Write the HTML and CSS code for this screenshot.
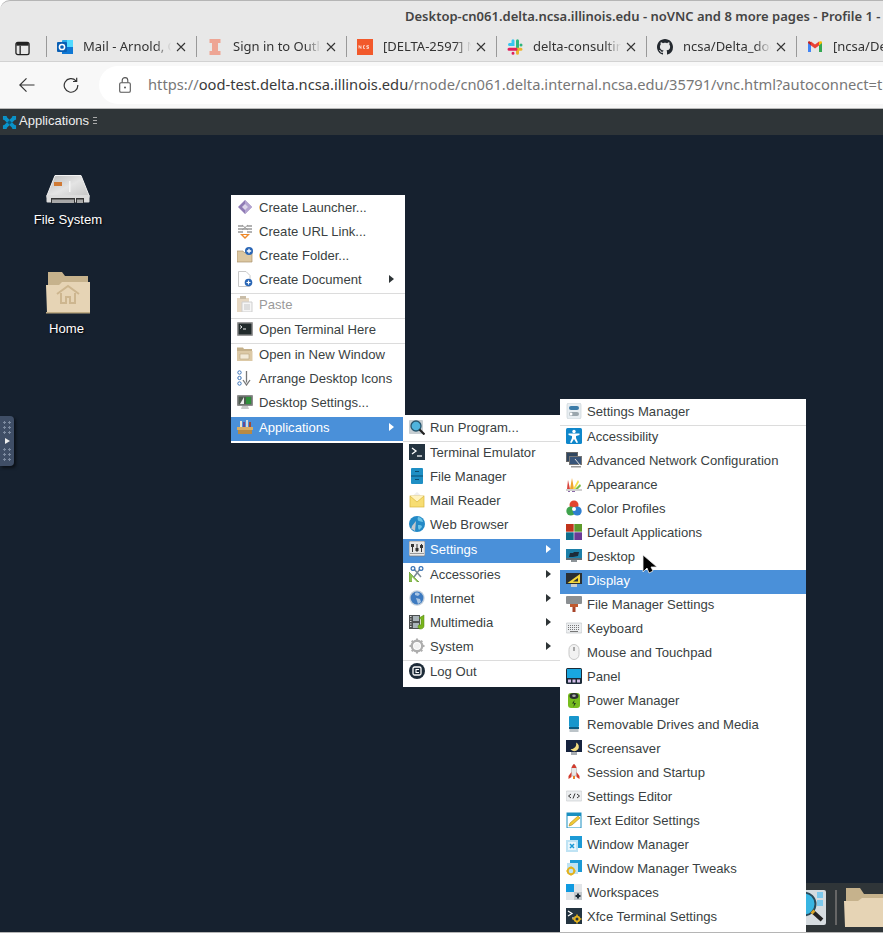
FILE: index.html
```html
<!DOCTYPE html>
<html>
<head>
  <title>Desktop-cn061.delta.ncsa.illinois.edu - noVNC</title>
  <link rel="stylesheet" href="styles.css">
</head>
<body>
  <div class="browser">
    <div class="titlebar">
      <span class="window-title">Desktop-cn061.delta.ncsa.illinois.edu - noVNC and 8 more pages - Profile 1 - Microsoft Edge</span>
    </div>

    <div class="tabstrip">
      <div class="sidebar-btn">
        <svg width="15" height="15" viewBox="0 0 16 16"><rect x="1" y="1.500" width="14" height="13" rx="2" fill="none" stroke="#222" stroke-width="1.400"/><path d="M5.500 5v9.500" stroke="#222" stroke-width="1.400"/><rect x="1.500" y="2" width="13" height="3" fill="#222"/></svg>
      </div>
      <div class="tab">
        <svg class="favicon" viewBox="0 0 16 16"><rect x="5" y="1" width="11" height="14" rx="1" fill="#28a8ea"/><rect x="10" y="1" width="6" height="7" fill="#50d9ff"/><rect x="5" y="8" width="11" height="7" fill="#0f78d4"/><rect x="0" y="3" width="10" height="10" rx="1" fill="#0a5fb4"/><circle cx="5" cy="8" r="2.600" fill="none" stroke="#fff" stroke-width="1.500"/></svg>
        <span class="tab-title">Mail - Arnold, Gregory</span>
        <svg class="tab-close" viewBox="0 0 10 10"><path d="M1 1l8 8M9 1l-8 8"/></svg>
      </div>
      <div class="tab">
        <svg class="favicon" viewBox="0 0 16 16"><path d="M2.500 0h11v4H11v8h2.500v4h-11v-4H5V4H2.500z" fill="#eea594"/></svg>
        <span class="tab-title">Sign in to Outlook</span>
        <svg class="tab-close" viewBox="0 0 10 10"><path d="M1 1l8 8M9 1l-8 8"/></svg>
      </div>
      <div class="tab">
        <svg class="favicon" viewBox="0 0 16 16"><rect width="16" height="16" fill="#f2592b"/><path d="M2 9.500v-3l2 3v-3M8 6.700H6.500v2.700H8M12 6.700H9.800V8h1.700v1.400H9.500" fill="none" stroke="#fff" stroke-width=".7"/></svg>
        <span class="tab-title">[DELTA-2597] NCSA Jira</span>
        <svg class="tab-close" viewBox="0 0 10 10"><path d="M1 1l8 8M9 1l-8 8"/></svg>
      </div>
      <div class="tab">
        <svg class="favicon" viewBox="0 0 16 16" stroke-width="3" stroke-linecap="round" fill="none"><path d="M6 1.800v3.700H2.500" stroke="#36c5f0"/><path d="M14 6v.1M10.500 1.800v7" stroke="#2eb67d"/><path d="M14 10.300h-3.500v3.900" stroke="#ecb22e"/><path d="M2 10.300h7M6 14.200v0" stroke="#e01e5a"/></svg>
        <span class="tab-title">delta-consulting (Channel)</span>
        <svg class="tab-close" viewBox="0 0 10 10"><path d="M1 1l8 8M9 1l-8 8"/></svg>
      </div>
      <div class="tab">
        <svg class="favicon" viewBox="0 0 16 16"><path fill="#24292f" d="M8 0C3.580 0 0 3.580 0 8c0 3.540 2.290 6.530 5.470 7.590.4.070.55-.17.55-.38 0-.19-.01-.82-.01-1.490-2.010.37-2.530-.49-2.690-.94-.09-.23-.48-.94-.82-1.130-.28-.15-.68-.52-.01-.53.63-.01 1.080.58 1.230.82.72 1.210 1.870.87 2.330.66.07-.52.28-.87.51-1.070-1.780-.2-3.640-.89-3.640-3.950 0-.87.31-1.590.82-2.150-.08-.2-.36-1.020.08-2.120 0 0 .67-.21 2.200.82.64-.18 1.320-.27 2-.27.68 0 1.360.09 2 .27 1.530-1.040 2.200-.82 2.200-.82.44 1.100.16 1.920.08 2.120.51.56.82 1.270.82 2.150 0 3.070-1.870 3.750-3.650 3.950.29.25.54.73.54 1.480 0 1.070-.01 1.930-.01 2.200 0 .21.15.46.55.38A8.013 8.013 0 0016 8c0-4.420-3.580-8-8-8z"/></svg>
        <span class="tab-title">ncsa/Delta_docs</span>
        <svg class="tab-close" viewBox="0 0 10 10"><path d="M1 1l8 8M9 1l-8 8"/></svg>
      </div>
      <div class="tab">
        <svg class="favicon" viewBox="0 0 16 16"><path d="M1 3.500V13h3V6z" fill="#4285f4"/><path d="M12 6v7h3V3.500z" fill="#34a853"/><path d="M12 2.500v4L15 4v-.5c0-1-1.200-1.700-2-1z" fill="#fbbc04"/><path d="M4 6.500v-4l4 3 4-3v4l-4 3z" fill="#ea4335"/><path d="M1 4v-.5c0-1 1.200-1.700 2-1l1 .8v3.200z" fill="#c5221f"/></svg>
        <span class="tab-title">[ncsa/Delta_docs] Issue</span>
      </div>
    </div>

    <div class="toolbar">
      <svg class="nav-btn" viewBox="0 0 16 16"><path d="M15.500 8H.8M7.500 1.300L.8 8l6.700 6.700" fill="none" stroke="#333" stroke-width="1.200"/></svg>
      <svg class="nav-btn" viewBox="0 0 16 16"><path d="M13 3.800A6.800 6.800 0 1 0 14.800 8M13.700.8v3.700H10" fill="none" stroke="#333" stroke-width="1.200"/></svg>
      <div class="omnibox">
        <svg class="lock" viewBox="0 0 12 16"><rect x=".7" y="5.700" width="10.600" height="9.600" rx="1.300" fill="none" stroke="#555" stroke-width="1.100"/><path d="M3.200 5.500V3.400a2.800 2.800 0 0 1 5.600 0v2.100" fill="none" stroke="#555" stroke-width="1.100"/><circle cx="6" cy="10.500" r="1" fill="#555"/></svg>
        <span class="url">https://<b>ood-test.delta.ncsa.illinois.edu</b>/rnode/cn061.delta.internal.ncsa.edu/35791/vnc.html?autoconnect=true&amp;path=rnode</span>
      </div>
    </div>
  </div>

  <div class="desktop">
    <div class="panel">
      <svg class="panel-logo" viewBox="0 0 16 16"><path d="M3 3l10 10M13 3L3 13" stroke="#0a93c9" stroke-width="4"/><path d="M1 1h4v2H3v2H1zM11 1h4v4h-2V3h-2zM1 11h2v2h2v2H1zM13 11h2v4h-4v-2h2z" fill="#0a93c9"/><path d="M8 5.500L10.500 8 8 10.500 5.500 8z" fill="#07597c"/></svg>
      <span class="panel-label">Applications</span>
      <span class="panel-handle"></span>
    </div>

    <div class="desk-icon desk-fs">
      <svg width="44" height="28" viewBox="0 0 44 28">
        <defs><linearGradient id="drive" x1="0" y1="0" x2="1" y2="1"><stop offset="0" stop-color="#b9b9b9"/><stop offset=".5" stop-color="#e4e4e4"/><stop offset="1" stop-color="#c4c4c4"/></linearGradient></defs>
        <path d="M9 .5h26l8 20v2H1v-2z" fill="url(#drive)" stroke="#f2f2f2"/>
        <rect x="8" y="7" width="8" height="4" fill="#d07a35"/>
        <rect x="23" y="6" width="1.500" height="11" fill="#f4f4f4"/>
        <path d="M.5 20h43v6.500a1 1 0 0 1-1 1h-41a1 1 0 0 1-1-1z" fill="#dcdcdc"/>
        <path d="M5 23h24v5H5zM30 23h8v5h-8z" fill="#353535"/>
        <path d="M6 24.500h22V28H6zM31 24.500h6V28h-6z" fill="#a8a8a8"/>
      </svg>
      <span class="desk-label">File System</span>
    </div>
    <div class="desk-icon desk-home">
      <svg width="44" height="43" viewBox="0 0 44 43"><path d="M2 1h14l3 4h23v10H2z" fill="#c6b28c"/><path d="M0 14h13l3-3h28v31H1z" fill="#e6d4b5"/><path d="M0 41h44v1.500H0z" fill="#bda981"/><path d="M11 23l11-8 11 8M15 22v10h5v-6h4v6h5V22" fill="none" stroke="#cdb68f" stroke-width="2"/></svg>
      <span class="desk-label">Home</span>
    </div>

    <div class="side-handle">
      <span class="handle-dots"></span>
      <span class="handle-play"></span>
      <span class="handle-dots"></span>
    </div>

    <!-- desktop context menu -->
    <div class="menu menu-main">
      <div class="item"><svg class="ico" viewBox="0 0 16 16"><path d="M8 1l7 7-7 7-7-7z" fill="#8f7bb5"/><path d="M8 1l7 7-7 7z" fill="#b3a4d0"/><path d="M5 8l3-3 3 3-3 3z" fill="#ddd6ea"/></svg>Create Launcher...</div>
      <div class="item"><svg class="ico" viewBox="0 0 16 16"><path d="M1 3h5M10 3h5M1 6h14M1 9h5M10 9h5" stroke="#666" stroke-width="1.200"/><path d="M5 2l6 5M11 2L5 7" stroke="#999"/><path d="M3 11h10l-5 5z" fill="#ee8a2b"/><path d="M6 12h4l-2 2z" fill="#fff"/></svg>Create URL Link...</div>
      <div class="item"><svg class="ico" viewBox="0 0 16 16"><path d="M0 4h6l1 1.500h8V15H0z" fill="#dcc7a0" stroke="#a9946f" stroke-width=".7"/><circle cx="12" cy="4" r="4" fill="#2a66b5"/><path d="M9.800 4h4.400M12 1.800v4.400" stroke="#fff" stroke-width="1.300"/></svg>Create Folder...</div>
      <div class="item"><svg class="ico" viewBox="0 0 16 16"><path d="M1.500.5H9l4 4v11H1.500z" fill="#fff" stroke="#c8c8c8"/><circle cx="11.500" cy="11.500" r="3.800" fill="#2a66b5"/><path d="M9.500 11.500h4M11.500 9.500v4" stroke="#fff" stroke-width="1.200"/></svg>Create Document<span class="arrow"></span></div>
      <div class="sep"></div>
      <div class="item disabled"><svg class="ico" viewBox="0 0 16 16"><rect x="0" y="2" width="12" height="14" fill="#e6d8c3"/><rect x="3" y="0" width="6" height="3" fill="#c9bda8"/><path d="M5 6h10v10H5z" fill="#f6f6f6" stroke="#cfcfcf"/><path d="M7 9h6M7 11h6M7 13h6" stroke="#c4c4c4"/></svg>Paste</div>
      <div class="sep"></div>
      <div class="item"><svg class="ico" viewBox="0 0 16 16"><rect y="1" width="16" height="14" rx="1" fill="#9a9a9a"/><rect x="1.500" y="2.500" width="13" height="11" fill="#222b2c"/><path d="M3 4.500L5 6 3 7.500M6 8h3" stroke="#eee" fill="none"/></svg>Open Terminal Here</div>
      <div class="sep"></div>
      <div class="item"><svg class="ico" viewBox="0 0 16 16"><path d="M0 1.500h6L7 3h8v12H0z" fill="#c4b08a"/><path d="M0 5h15.500v10H0z" fill="#dcc9a6"/><path d="M3 8h9v5H3z" fill="#f2ead8" stroke="#b9a680" stroke-width=".6"/></svg>Open in New Window</div>
      <div class="item"><svg class="ico" viewBox="0 0 16 16"><circle cx="2.500" cy="2.500" r="1.700" fill="none" stroke="#3c74b8"/><circle cx="2.500" cy="8" r="1.700" fill="none" stroke="#3c74b8"/><circle cx="2.500" cy="13.500" r="1.700" fill="none" stroke="#3c74b8"/><path d="M9.500 1v11.500M6 10l3.500 5 3.500-5" fill="none" stroke="#777" stroke-width="1.300"/></svg>Arrange Desktop Icons</div>
      <div class="item"><svg class="ico" viewBox="0 0 16 16"><rect y="1" width="16" height="11" rx="1" fill="#8d8d8d"/><rect x="1.500" y="2.500" width="13" height="8" fill="#4d5a4e"/><path d="M9 3h5v7H9z" fill="#2f8f3a"/><path d="M3 10l4-7v7z" fill="#eee"/><path d="M5 12h6l1 3H4z" fill="#c8c8c8"/></svg>Desktop Settings...</div>
      <div class="item active"><svg class="ico" viewBox="0 0 16 16"><path d="M1 9h14v6H1z" fill="#b88a45"/><path d="M0 8h16v3H0z" fill="#d9ad63"/><rect x="3" y="2" width="2" height="6" fill="#e8e2d0"/><rect x="6" y="3" width="2" height="5" fill="#6a4a8c"/><rect x="9" y="1" width="2" height="7" fill="#d8d8d8"/><rect x="12" y="3" width="2" height="5" fill="#a04a3a"/></svg>Applications<span class="arrow"></span></div>
    </div>

    <!-- applications submenu -->
    <div class="menu menu-apps">
      <div class="item"><svg class="ico" viewBox="0 0 16 16"><rect y="1" width="14" height="14" rx="1" fill="#c7ced2"/><circle cx="7" cy="7" r="5" fill="#4fb3dc" stroke="#27566e" stroke-width="1.300"/><path d="M10.500 10.500l5 5" stroke="#222" stroke-width="2.200"/></svg>Run Program...</div>
      <div class="sep"></div>
      <div class="item"><svg class="ico" viewBox="0 0 16 16"><rect width="16" height="16" fill="#243440"/><path d="M3 4l4 3-4 3" fill="none" stroke="#fff" stroke-width="1.300"/><path d="M8 12h5" stroke="#fff" stroke-width="1.300"/></svg>Terminal Emulator</div>
      <div class="item"><svg class="ico" viewBox="0 0 16 16"><rect x="2" y="0" width="12" height="16" rx="1" fill="#1f8fc4"/><path d="M2 8h12" stroke="#0b4d70"/><path d="M6 3.500h4M6 11.500h4" stroke="#0b4d70" stroke-width="1.200"/></svg>File Manager</div>
      <div class="item"><svg class="ico" viewBox="0 0 16 16"><path d="M8 0l4 3.500H4z" fill="#eee"/><rect x="1" y="4" width="14" height="11" fill="#f7dd72" stroke="#d8b53c" stroke-width=".7"/><path d="M1 4l7 6 7-6" fill="#fff3c0" stroke="#d8b53c" stroke-width=".7"/></svg>Mail Reader</div>
      <div class="item"><svg class="ico" viewBox="0 0 16 16"><circle cx="8" cy="8" r="8" fill="#2389c6"/><path d="M9 1c3 0 5 3 5 5-2 0-3-1-4-1S8 3 9 1zM9 9c2 0 4 0 4 2l-3 3c-1-1-1-3-1-5z" fill="#6cc4e8"/><path d="M7 5l-1 10-3-2-1 1 1-4z" fill="#c3c7ca"/></svg>Web Browser</div>
      <div class="item active"><svg class="ico" viewBox="0 0 16 16"><rect width="16" height="15" rx="1" fill="#e8e8e8" stroke="#777" stroke-width=".7"/><path d="M3.500 3v8M8 3v8M12.500 3v8" stroke="#333"/><rect x="2" y="3" width="3" height="3" fill="#333"/><rect x="6.500" y="7" width="3" height="3" fill="#333"/><rect x="11" y="4" width="3" height="3" fill="#333"/><path d="M1 12.500h14" stroke="#999"/></svg>Settings<span class="arrow"></span></div>
      <div class="item"><svg class="ico" viewBox="0 0 16 16"><path d="M0 16V6l10 10z" fill="#8cc152" stroke="#5a8f2a" stroke-width=".6"/><path d="M3 16v-5l5 5z" fill="#fff"/><path d="M5 11l6-8M12 11L5 3" stroke="#7a8a96" stroke-width="1.500"/><circle cx="4" cy="2.500" r="1.900" fill="none" stroke="#3671b5" stroke-width="1.200"/><circle cx="12" cy="2.500" r="1.900" fill="none" stroke="#3671b5" stroke-width="1.200"/></svg>Accessories<span class="arrow"></span></div>
      <div class="item"><svg class="ico" viewBox="0 0 16 16"><circle cx="8" cy="8" r="7.700" fill="#c4d0dc"/><circle cx="8" cy="8" r="6.400" fill="#3d7ac0"/><path d="M6 3c2-1 4 0 5 1L9 6 6 5zM7 8l4 1 1 3-3 2-1-3z" fill="#a9c5e3"/></svg>Internet<span class="arrow"></span></div>
      <div class="item"><svg class="ico" viewBox="0 0 16 16"><rect y="1" width="11" height="14" fill="#4d5051"/><path d="M1 2.500h1.500M1 5h1.500M1 7.500h1.500M1 10h1.500M1 12.500h1.500" stroke="#ddd"/><rect x="4" y="2" width="6" height="5" fill="#a9b3b9"/><rect x="4" y="9" width="6" height="5" fill="#a9b3b9"/><path d="M10 4l5-3v11c0 2-2 3-3.500 3S9 14 9 12.500s1.500-2 3-1.500V5z" fill="#7ab51d" stroke="#4f7f10" stroke-width=".5"/></svg>Multimedia<span class="arrow"></span></div>
      <div class="item"><svg class="ico" viewBox="0 0 16 16"><circle cx="8" cy="8" r="5.200" fill="none" stroke="#aeaeae" stroke-width="2.400"/><path d="M8 .5V3M8 13v2.500M.5 8H3M13 8h2.500M2.700 2.700l1.800 1.800M11.500 11.500l1.800 1.800M2.700 13.300l1.800-1.800M11.500 4.500l1.800-1.800" stroke="#aeaeae" stroke-width="2"/><circle cx="8" cy="8" r="3" fill="#f2f2f2"/></svg>System<span class="arrow"></span></div>
      <div class="sep"></div>
      <div class="item"><svg class="ico" viewBox="0 0 16 16"><circle cx="8" cy="8" r="8" fill="#1d2b38"/><rect x="4" y="4" width="8" height="8" rx="1.500" fill="none" stroke="#fff" stroke-width="1.300"/><path d="M10 6.500H7v3h3" fill="none" stroke="#fff" stroke-width="1.100"/></svg>Log Out</div>
    </div>

    <!-- settings submenu -->
    <div class="menu menu-settings">
      <div class="item"><svg class="ico" viewBox="0 0 16 16"><rect x="1" y="0" width="14" height="16" rx="2" fill="#e8eef2" stroke="#c2ccd2" stroke-width=".6"/><rect x="3" y="3" width="10" height="4" rx="2" fill="#3b7ba8"/><rect x="3" y="9" width="10" height="4" rx="2" fill="#9aa6ad"/><circle cx="5" cy="11" r="1.500" fill="#fff"/></svg>Settings Manager</div>
      <div class="sep"></div>
      <div class="item"><svg class="ico" viewBox="0 0 16 16"><rect width="16" height="16" rx="1.500" fill="#0f87cb"/><circle cx="8" cy="3.500" r="1.700" fill="#fff"/><path d="M2.500 5.500h11V7L10 8v2l2 4.500-1.500.5L8 11l-2.500 4L4 14.500 6 10V8L2.500 7z" fill="#fff"/></svg>Accessibility</div>
      <div class="item"><svg class="ico" viewBox="0 0 16 16"><rect x="0" y="0" width="12" height="10" fill="#666"/><rect x="1" y="1" width="10" height="8" fill="#30465f"/><rect x="3" y="4" width="13" height="9" fill="#777"/><rect x="4" y="5" width="11" height="7" fill="#38557a"/><path d="M5 14h10v1.500H5z" fill="#999"/><path d="M9 7l5 6" stroke="#ddd"/></svg>Advanced Network Configuration</div>
      <div class="item"><svg class="ico" viewBox="0 0 16 16"><path d="M0 15h16v-2H0z" fill="#d0d0d0"/><path d="M1 13l1-9 2 9z" fill="#d9433a"/><path d="M4 13L6 2l2 11z" fill="#f0a52f"/><path d="M7 13l5-9 1 2-4 7z" fill="#f6e04a"/><path d="M9 13l5-5 1 2-3 3z" fill="#7bbb4a"/><path d="M2 15h2v1H2zM6 15h3v1H6z" fill="#8a6aa8"/></svg>Appearance</div>
      <div class="item"><svg class="ico" viewBox="0 0 16 16"><circle cx="8" cy="5" r="4.500" fill="#e2452f"/><circle cx="4.800" cy="11" r="4.500" fill="#3fa34d"/><circle cx="11.200" cy="11" r="4.500" fill="#2f7fd0"/><circle cx="8" cy="9" r="2" fill="#fff"/></svg>Color Profiles</div>
      <div class="item"><svg class="ico" viewBox="0 0 16 16"><rect width="7.700" height="7.700" fill="#c1341c"/><rect x="8.300" width="7.700" height="7.700" fill="#5d9a2b"/><rect y="8.300" width="7.700" height="7.700" fill="#0f6e8c"/><rect x="8.300" y="8.300" width="7.700" height="7.700" fill="#6b3a96"/></svg>Default Applications</div>
      <div class="item"><svg class="ico" viewBox="0 0 16 16"><rect y="1" width="16" height="11" fill="#1c7fa8"/><rect y="10" width="16" height="2" fill="#5d6d75"/><path d="M3 9l1-4h3l1-1h5l-1 4-5 1z" fill="#1d2b38"/><path d="M5 12h6v2H5z" fill="#8d9498"/></svg>Desktop</div>
      <div class="item active"><svg class="ico" viewBox="0 0 16 16"><rect y="1" width="16" height="11" fill="#2a2f33"/><path d="M1.500 11L14 2v9z" fill="#f4d73a"/><path d="M7 9.500L12 6v3.500z" fill="#2a2f33"/><path d="M5 12h6v3H5z" fill="#c8ccd0"/></svg>Display</div>
      <div class="item"><svg class="ico" viewBox="0 0 16 16"><rect y="0" width="16" height="8" rx="1" fill="#8b8f92"/><rect x="6.500" y="8" width="3" height="8" fill="#a8442a"/><rect x="4" y="8" width="8" height="3" fill="#c05a30"/></svg>File Manager Settings</div>
      <div class="item"><svg class="ico" viewBox="0 0 16 16"><rect y="3" width="16" height="10" rx="1" fill="#eceef0" stroke="#b8bcc0" stroke-width=".6"/><path d="M2 5.500h12M2 7.500h12M2 9.500h12" stroke="#777" stroke-dasharray="1 1"/><path d="M4 11.500h8" stroke="#777"/></svg>Keyboard</div>
      <div class="item"><svg class="ico" viewBox="0 0 16 16"><rect x="3" y=".5" width="10" height="15" rx="5" fill="#f2f2f2" stroke="#c8c8c8"/><rect x="7.300" y="3" width="1.400" height="4" fill="#888"/></svg>Mouse and Touchpad</div>
      <div class="item"><svg class="ico" viewBox="0 0 16 16"><rect width="16" height="16" rx="1.500" fill="#1c2b38"/><rect x="1" y="1" width="14" height="9" fill="#19a7e0"/><rect x="2" y="11.500" width="3" height="3" fill="#d4bfe8"/><rect x="6.500" y="11.500" width="3" height="3" fill="#d4bfe8"/><rect x="11" y="11.500" width="3" height="3" fill="#d4bfe8"/></svg>Panel</div>
      <div class="item"><svg class="ico" viewBox="0 0 16 16"><rect x="2" y="1" width="12" height="15" rx="3" fill="#77bd1e"/><ellipse cx="8" cy="4" rx="4.500" ry="3" fill="#2b2f31"/><ellipse cx="8" cy="3.700" rx="1.800" ry="1.200" fill="#aaa"/><path d="M8.500 8L6 11.500h2L7.500 15l2.500-4H8z" fill="#23401a"/></svg>Power Manager</div>
      <div class="item"><svg class="ico" viewBox="0 0 16 16"><rect x="3" y="0" width="10" height="11" rx="1" fill="#1796cc"/><rect x="3" y="11" width="10" height="2" fill="#0b5a80"/><rect x="3.500" y="13" width="9" height="3" fill="#bcc4c9"/></svg>Removable Drives and Media</div>
      <div class="item"><svg class="ico" viewBox="0 0 16 16"><rect y="0" width="16" height="12" fill="#16233e"/><path d="M10 2.500A4.500 4.500 0 1 1 4.500 9 5 5 0 0 0 10 2.500z" fill="#f3dc7f"/><path d="M5 12h6v3H5z" fill="#a8adb2"/></svg>Screensaver</div>
      <div class="item"><svg class="ico" viewBox="0 0 16 16"><path d="M8 0c3 3 3 7 2 12H6C5 7 5 3 8 0z" fill="#e8e8e8" stroke="#a8a8a8" stroke-width=".6"/><path d="M8 0c1.500 1.500 2.300 3 2.500 4h-5C5.700 3 6.500 1.500 8 0z" fill="#d33a2b"/><path d="M5.500 8l-3 4v3l3-2zM10.500 8l3 4v3l-3-2z" fill="#d33a2b"/><path d="M7 12h2v3H7z" fill="#e8842b"/></svg>Session and Startup</div>
      <div class="item"><svg class="ico" viewBox="0 0 16 16"><rect y="3" width="16" height="10" rx="1" fill="#eceef0" stroke="#c2c6ca" stroke-width=".6"/><path d="M5 6L2.500 8 5 10M11 6l2.500 2L11 10M9 5.500l-2 5" fill="none" stroke="#333"/></svg>Settings Editor</div>
      <div class="item"><svg class="ico" viewBox="0 0 16 16"><rect x="1" y="1" width="14" height="15" fill="#fff" stroke="#1a8fc0"/><rect x="1" y="1" width="14" height="3" fill="#1a8fc0"/><path d="M3 14l1-3 8-7 2 2-8 7z" fill="#f2c935" stroke="#9a7a10" stroke-width=".5"/></svg>Text Editor Settings</div>
      <div class="item"><svg class="ico" viewBox="0 0 16 16"><rect x="4" y="0" width="12" height="12" fill="#1c9ad6"/><rect x="0" y="4" width="12" height="12" fill="#bfe3f4"/><rect x="2" y="6" width="8" height="8" fill="#e9f6fc"/><path d="M4 8l4 4M8 8l-4 4" stroke="#1c9ad6" stroke-width="1.500"/></svg>Window Manager</div>
      <div class="item"><svg class="ico" viewBox="0 0 16 16"><rect x="4" y="0" width="12" height="12" fill="#1c9ad6"/><rect x="1" y="3" width="11" height="11" fill="#bfe3f4"/><circle cx="5" cy="11" r="3.300" fill="none" stroke="#e3b21e" stroke-width="2"/><path d="M5 6.500v1.200M5 14.300v1.200M.5 11h1.200M8.300 11h1.200" stroke="#e3b21e" stroke-width="1.500"/></svg>Window Manager Tweaks</div>
      <div class="item"><svg class="ico" viewBox="0 0 16 16"><rect width="8" height="8" fill="#0f9ae0"/><rect x="8" width="8" height="8" fill="#e2e5e8"/><rect y="8" width="8" height="8" fill="#e2e5e8"/><rect x="8" y="8" width="8" height="8" fill="#c4c9cd"/><path d="M12 9.500v5M9.500 12h5" stroke="#1c2b38" stroke-width="2"/></svg>Workspaces</div>
      <div class="item"><svg class="ico" viewBox="0 0 16 16"><rect width="16" height="16" fill="#243440"/><path d="M2 3l4 2.500L2 8M6 10h2" fill="none" stroke="#fff" stroke-width="1.200"/><circle cx="11" cy="11" r="2.400" fill="none" stroke="#e3b21e" stroke-width="1.800"/><path d="M11 6.500V8M11 14v1.500M6.500 11H8M14 11h1.500" stroke="#e3b21e" stroke-width="1.500"/></svg>Xfce Terminal Settings</div>
    </div>

    <svg class="cursor" width="17" height="21" viewBox="0 0 17 21"><path d="M1 1v17l4-4 2 5 4-2-2-4h6z" fill="#000" stroke="#eee" stroke-width=".8"/></svg>

    <div class="dock">
      <svg class="dock-find" width="20" height="35" viewBox="0 0 20 35"><rect x="-4" y="0" width="24" height="35" rx="2" fill="#d6dce0"/><rect x="11" y="2" width="6" height="6" fill="#7cc8ec"/><rect x="11" y="10" width="6" height="6" fill="#7cc8ec"/><circle cx="-2" cy="14" r="11.500" fill="#38b5e2" stroke="#2a4a5a" stroke-width="2"/><path d="M6 21l10 9" stroke="#222" stroke-width="4"/><path d="M6 21l2 2" stroke="#d8a52a" stroke-width="4"/></svg>
      <span class="dock-sep"></span>
      <svg class="dock-folder" width="40" height="39" viewBox="0 0 40 39"><path d="M2 0h14l4 6h20v12H2z" fill="#c6b28c"/><path d="M0 13h14l4-3h22v29H1z" fill="#e6d4b5"/></svg>
    </div>
  </div>
</body>
</html>
```

FILE: styles.css
```css
* {
  box-sizing: border-box;
}

html, body {
  margin: 0;
  height: 100%;
  overflow: hidden;
}

body {
  background-color: #fff;
  display: flex;
  flex-direction: column;
  font-family: "Noto Sans", sans-serif;
}

/* browser chrome */
.browser {
  flex: none;
  height: 109px;
  background-color: #e8e8e8;
  border-top: 1px solid #b5b5b5;
  border-radius: 10px 0 0 0;
  display: flex;
  flex-direction: column;
}

.titlebar {
  height: 31px;
  padding: 3px 0 0 405px;
  white-space: nowrap;
  overflow: hidden;
}

.window-title {
  font-size: 13px;
  font-weight: 600;
  color: #444;
}

.tabstrip {
  height: 30px;
  display: flex;
  align-items: center;
  border-bottom: 1px solid #d2d2d2;
  overflow: hidden;
}

.sidebar-btn {
  flex: none;
  width: 46px;
  height: 16px;
  padding-left: 15px;
}

.tab {
  flex: none;
  width: 150px;
  height: 21px;
  border-left: 1px solid #999;
  padding-left: 10px;
  display: flex;
  align-items: center;
}

.favicon {
  flex: none;
  width: 16px;
  height: 16px;
}

.tab-title {
  flex: none;
  width: 90px;
  margin-left: 10px;
  padding-bottom: 2px;
  font-size: 13px;
  color: #333;
  white-space: nowrap;
  overflow: hidden;
  -webkit-mask-image: linear-gradient(to right, #000 80%, transparent 98%);
  mask-image: linear-gradient(to right, #000 80%, transparent 98%);
}

.tab-close {
  flex: none;
  width: 10px;
  height: 10px;
  margin-left: 3px;
  fill: none;
  stroke: #333;
  stroke-width: 1.1;
}

.toolbar {
  flex: none;
  height: 47px;
  background-color: #f8f8f8;
  border-bottom: 1px solid #b9b9b9;
  display: flex;
  align-items: center;
  padding: 0 0 1px 19px;
  gap: 28px;
}

.nav-btn {
  flex: none;
  width: 16px;
  height: 16px;
}

.omnibox {
  flex: none;
  width: 800px;
  height: 38px;
  margin-left: -8px;
  background-color: #fff;
  border-radius: 19px;
  display: flex;
  align-items: center;
  padding-left: 20px;
  white-space: nowrap;
  overflow: hidden;
}

.lock {
  flex: none;
  width: 12px;
  height: 16px;
  margin-right: 17px;
}

.url {
  padding-bottom: 1px;
  font-size: 14.7px;
  color: #777;
}

.url b {
  font-weight: 400;
  color: #3a3a3a;
}

/* remote desktop */
.desktop {
  position: relative;
  flex: 1;
  background-color: #16212f;
  border-bottom: 1px solid #b5b5b5;
  overflow: hidden;
  font-family: "Liberation Sans", Arial, sans-serif;
}

.panel {
  height: 26px;
  background-color: #2f3538;
  display: flex;
  align-items: center;
  padding-left: 2px;
  color: #eee;
  font-size: 13px;
}

.panel-logo {
  width: 15px;
  height: 15px;
  margin-right: 2px;
}

.panel-label {
  padding-bottom: 3px;
}

.panel-handle {
  width: 4px;
  height: 8px;
  margin: 0 0 2px 4px;
  background: repeating-linear-gradient(#aaa 0 1px, transparent 1px 3px);
}

.desk-icon {
  position: absolute;
  display: flex;
  flex-direction: column;
  align-items: center;
  width: 90px;
  color: #fff;
  font-size: 13.1px;
  text-shadow: 1px 1px 2px #000;
}

.desk-fs {
  left: 23px;
  top: 66px;
}

.desk-home {
  left: 23px;
  top: 162px;
}

.desk-label {
  margin-top: 7px;
}

.desk-fs .desk-label {
  margin-top: 9px;
}

.desk-home .desk-label {
  margin-right: 3px;
}

.side-handle {
  position: absolute;
  left: 0;
  top: 307px;
  width: 14px;
  height: 50px;
  background-color: #3f4e66;
  border-radius: 0 4px 4px 0;
  box-shadow: 2px 2px 3px rgba(0, 0, 0, 0.5);
  display: flex;
  flex-direction: column;
  align-items: center;
  justify-content: center;
  gap: 3px;
}

.handle-dots {
  width: 10px;
  height: 15px;
  background-image: radial-gradient(#7d8ba0 1px, transparent 1.3px);
  background-size: 5px 5px;
}

.handle-play {
  width: 0;
  height: 0;
  border-left: 5px solid #eee;
  border-top: 3px solid transparent;
  border-bottom: 3px solid transparent;
}

/* xfce menus */
.menu {
  position: absolute;
  background-color: #fff;
  color: #3a3f42;
  font-size: 13.1px;
}

.menu-main {
  left: 231px;
  top: 86px;
  width: 174px;
  padding-bottom: 3px;
  z-index: 1;
}

.menu-apps {
  left: 403px;
  top: 306px;
  width: 157px;
  padding-bottom: 4px;
  z-index: 2;
}

.menu-settings {
  left: 560px;
  top: 290px;
  width: 246px;
  padding-bottom: 4px;
  z-index: 3;
}

.item {
  height: 24px;
  display: flex;
  align-items: center;
  padding: 0 9px 0 6px;
  white-space: nowrap;
}

.menu-main .item {
  padding-right: 11px;
}

/* the highlight sits a little lower than the label in the xfce theme */
.item.active {
  margin: 3px 0 -1px;
  padding-bottom: 4px;
  background-color: #4a90d9;
  color: #fff;
}

.menu-settings .item.active {
  margin: 2px 0 -2px;
}

.item.disabled {
  color: #9a9a9a;
}

.ico {
  flex: none;
  width: 16px;
  height: 16px;
  margin-right: 5px;
}

.menu-main .ico {
  margin-right: 6px;
}

.sep {
  height: 1px;
  margin: 2px 0 -2px;
  background-color: #dcdcdc;
}

.arrow {
  width: 0;
  height: 0;
  margin-left: auto;
  border-left: 5px solid #2e3436;
  border-top: 4px solid transparent;
  border-bottom: 4px solid transparent;
}

.active .arrow {
  border-left-color: #fff;
}

.cursor {
  position: absolute;
  left: 642px;
  top: 445px;
  z-index: 4;
}

.dock {
  position: absolute;
  right: 0;
  bottom: 0;
  width: 77px;
  height: 49px;
  background-color: #2f3538;
  display: flex;
  align-items: center;
  overflow: hidden;
}

.dock-find {
  flex: none;
  margin-right: 9px;
}

.dock-sep {
  flex: none;
  width: 2px;
  height: 35px;
  background-color: #666;
  margin-right: 7px;
}

.dock-folder {
  flex: none;
}
```
